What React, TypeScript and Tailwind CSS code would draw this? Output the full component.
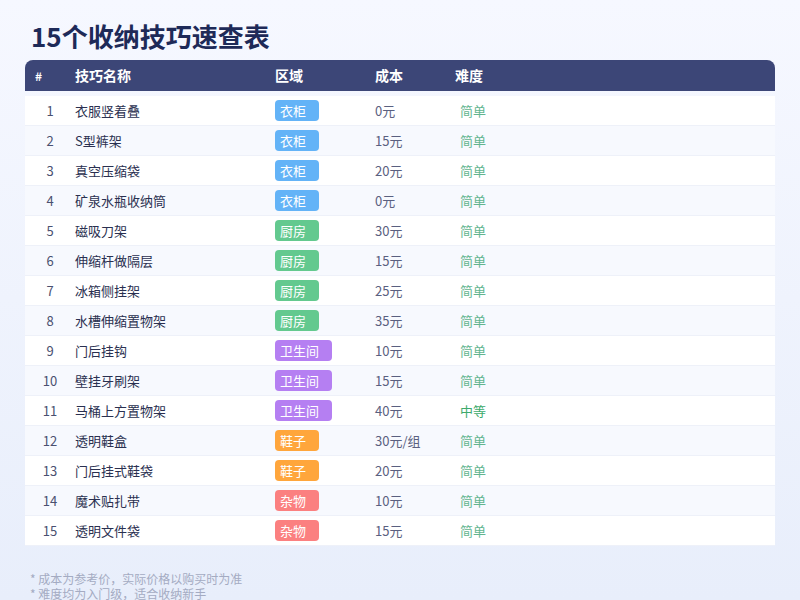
import React from 'react';

const rows: [string, string, string][] = [
  ['衣服竖着叠', '衣柜', '0元'],
  ['S型裤架', '衣柜', '15元'],
  ['真空压缩袋', '衣柜', '20元'],
  ['矿泉水瓶收纳筒', '衣柜', '0元'],
  ['磁吸刀架', '厨房', '30元'],
  ['伸缩杆做隔层', '厨房', '15元'],
  ['冰箱侧挂架', '厨房', '25元'],
  ['水槽伸缩置物架', '厨房', '35元'],
  ['门后挂钩', '卫生间', '10元'],
  ['壁挂牙刷架', '卫生间', '15元'],
  ['马桶上方置物架', '卫生间', '40元'],
  ['透明鞋盒', '鞋子', '30元/组'],
  ['门后挂式鞋袋', '鞋子', '20元'],
  ['魔术贴扎带', '杂物', '10元'],
  ['透明文件袋', '杂物', '15元'],
];

const badge: Record<string, string> = {
  衣柜: 'bg-[#63b3f7]',
  厨房: 'bg-[#63c98f]',
  卫生间: 'bg-[#b57ff2]',
  鞋子: 'bg-[#ffa63c]',
  杂物: 'bg-[#fb8080]',
};

export default function App() {
  return (
    <div
      className="w-[800px] h-[600px] overflow-hidden bg-gradient-to-b from-[#f6f8ff] to-[#e8eefb] px-[25px] pt-[18px] text-[#2a3050]"
      style={{ fontFamily: '"Noto Sans CJK SC", "Noto Sans", sans-serif' }}
    >
      <h1 className="text-[26px] font-bold leading-[36px] text-[#1e2a58] pl-[6px]">15个收纳技巧速查表</h1>
      <div className="mt-[6px] h-[31px] bg-[#3c4677] rounded-t-[8px] flex items-center text-white text-[14px] font-bold">
        <div className="w-[50px] pl-[10px] text-[12px]">#</div>
        <div className="w-[200px]">技巧名称</div>
        <div className="w-[100px]">区域</div>
        <div className="w-[80px]">成本</div>
        <div>难度</div>
      </div>
      <div className="mt-[5px]">
        {rows.map(([name, area, cost], i) => (
          <div
            key={i}
            className={`h-[30px] flex items-center text-[13px] border-b border-[#eef1f9] ${i % 2 ? 'bg-[#f7f9fe]' : 'bg-white'}`}
          >
            <div className="w-[50px] text-center text-[#4a5070]">{i + 1}</div>
            <div className="w-[200px]">{name}</div>
            <div className="w-[100px]">
              <span className={`inline-block h-[21px] leading-[21px] px-[5px] pr-[13px] rounded-[4px] text-white text-[13px] ${badge[area]}`}>
                {area}
              </span>
            </div>
            <div className="w-[85px] text-[#5a6080]">{cost}</div>
            <div className={i === 10 ? 'text-[#3daa6c]' : 'text-[#62b58f]'}>{i === 10 ? '中等' : '简单'}</div>
          </div>
        ))}
      </div>
      <div className="mt-[25px] text-[12px] leading-[15px] text-[#a4abc2] pl-[5px]">
        <p className="whitespace-nowrap">* 成本为参考价，实际价格以购买时为准</p>
        <p className="whitespace-nowrap">* 难度均为入门级，适合收纳新手</p>
      </div>
    </div>
  );
}
